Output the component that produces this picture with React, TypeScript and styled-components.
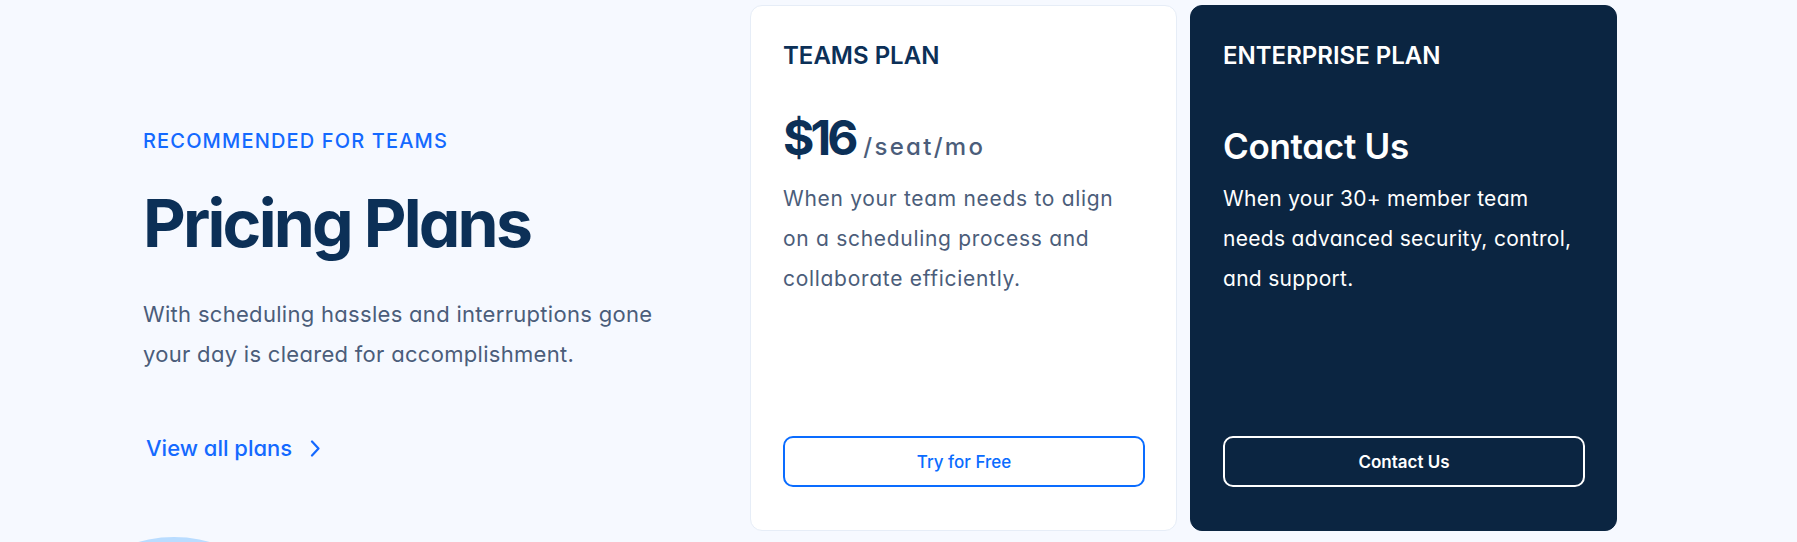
import React from "react";
import styled, { createGlobalStyle } from "styled-components";

const Global = createGlobalStyle`
  html, body { margin: 0; padding: 0; background: #f6f9ff; }
  body { font-family: Inter, "Noto Sans", sans-serif; font-feature-settings: "cv11" 1; -webkit-font-smoothing: antialiased; }
  * { box-sizing: border-box; }
`;

const Page = styled.main`
  position: relative;
  width: 1797px;
  height: 542px;
  overflow: hidden;
  background: #f6f9ff;
  display: flex;
  align-items: flex-start;
  padding: 5px 0 0 143px;
`;

const Intro = styled.section`
  width: 607px;
  padding-top: 124px;
  display: flex;
  flex-direction: column;
  align-items: flex-start;
`;

const Eyebrow = styled.div`
  font-size: 20px;
  line-height: 24px;
  font-weight: 500;
  letter-spacing: 1.15px;
  color: #1469ff;
  text-transform: uppercase;
`;

const Title = styled.h1`
  margin: 33px 0 0;
  font-size: 66px;
  line-height: 74px;
  font-weight: 700;
  letter-spacing: -2.8px;
  color: #0c3057;
`;

const Lead = styled.p`
  margin: 34px 0 0;
  width: 530px;
  font-size: 22px;
  line-height: 40px;
  font-weight: 400;
  letter-spacing: 0.3px;
  color: #4b5d7a;
`;

const MoreLink = styled.a`
  margin: 60px 0 0 3px;
  display: inline-flex;
  align-items: center;
  gap: 18px;
  font-size: 22px;
  line-height: 28px;
  font-weight: 500;
  color: #1469ff;
  text-decoration: none;
  cursor: pointer;
`;

const Blob = styled.div`
  position: absolute;
  left: 44px;
  top: 537px;
  width: 260px;
  height: 260px;
  border-radius: 50%;
  background: #b9dcff;
`;

const Cards = styled.div`
  display: flex;
  gap: 13px;
`;

const Card = styled.article<{ $dark?: boolean }>`
  width: 427px;
  height: 526px;
  border-radius: 12px;
  padding: 35px 31px 43px 32px;
  display: flex;
  flex-direction: column;
  background: ${(p) => (p.$dark ? "#0b2541" : "#ffffff")};
  border: 1px solid ${(p) => (p.$dark ? "#0b2541" : "#e6edf7")};
  color: ${(p) => (p.$dark ? "#ffffff" : "#0c3057")};
`;

const PlanName = styled.h2`
  margin: 0;
  font-size: 24px;
  line-height: 30px;
  font-weight: 600;
  letter-spacing: 0;
  text-transform: uppercase;
`;

const HeadRow = styled.div`
  margin-top: 37px;
  height: 60px;
  display: flex;
  align-items: baseline;
  gap: 9px;
`;

const Amount = styled.span`
  font-size: 48px;
  line-height: 60px;
  font-weight: 700;
  letter-spacing: -4px;
  color: #0c3057;
`;

const Per = styled.span`
  font-size: 24px;
  font-weight: 500;
  letter-spacing: 2.3px;
  color: #4b5d7a;
`;

const Contact = styled.span`
  padding-top: 8px;
  font-size: 35px;
  line-height: 60px;
  font-weight: 600;
  letter-spacing: -0.3px;
  color: #ffffff;
`;

const Desc = styled.p<{ $dark?: boolean }>`
  margin: 11px 0 0;
  font-size: 21px;
  line-height: 40px;
  font-weight: 400;
  letter-spacing: ${(p) => (p.$dark ? "0.3px" : "0.7px")};
  color: ${(p) => (p.$dark ? "#ffffff" : "#4b5d7a")};
`;

const Action = styled.button<{ $dark?: boolean }>`
  margin-top: auto;
  width: 362px;
  height: 51px;
  border-radius: 10px;
  border: 2px solid ${(p) => (p.$dark ? "#ffffff" : "#0a6cff")};
  background: transparent;
  color: ${(p) => (p.$dark ? "#ffffff" : "#0a6cff")};
  font-family: inherit;
  font-size: 17px;
  font-weight: ${(p) => (p.$dark ? 600 : 500)};
  cursor: pointer;
`;

const Chevron = () => (
  <svg width="10" height="17" viewBox="0 0 10 17" fill="none" aria-hidden="true">
    <path d="M2 1.5 L8.5 8.5 L2 15.5" stroke="#1469ff" strokeWidth="2.2" strokeLinecap="round" strokeLinejoin="round" />
  </svg>
);

export default function App() {
  return (
    <>
      <Global />
      <Page>
        <Blob />
        <Intro>
          <Eyebrow>Recommended for teams</Eyebrow>
          <Title>Pricing Plans</Title>
          <Lead>With scheduling hassles and interruptions gone your day is cleared for accomplishment.</Lead>
          <MoreLink>
            View all plans
            <Chevron />
          </MoreLink>
        </Intro>
        <Cards>
          <Card>
            <PlanName>Teams Plan</PlanName>
            <HeadRow>
              <Amount>$16</Amount>
              <Per>/seat/mo</Per>
            </HeadRow>
            <Desc>When your team needs to align on a scheduling process and collaborate efficiently.</Desc>
            <Action>Try for Free</Action>
          </Card>
          <Card $dark>
            <PlanName>Enterprise Plan</PlanName>
            <HeadRow>
              <Contact>Contact Us</Contact>
            </HeadRow>
            <Desc $dark>When your 30+ member team needs advanced security, control, and support.</Desc>
            <Action $dark>Contact Us</Action>
          </Card>
        </Cards>
      </Page>
    </>
  );
}
